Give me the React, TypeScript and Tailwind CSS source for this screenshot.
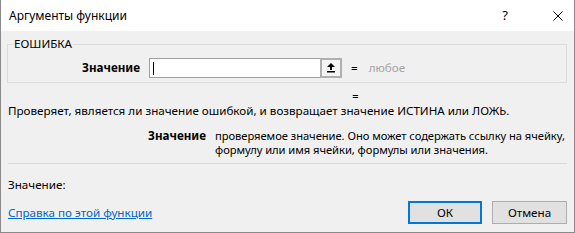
import React from "react";

const font = { fontFamily: '"Noto Sans", "Open Sans", sans-serif' };

function UpArrowIcon() {
  return (
    <svg width="8" height="10" viewBox="0 0 8 10" className="block">
      <path d="M4 0 L8 4 L5 4 L5 7 L3 7 L3 4 L0 4 Z" fill="#000" />
      <rect x="0" y="8" width="8" height="1.5" fill="#000" />
    </svg>
  );
}

function CloseIcon() {
  return (
    <svg width="10" height="10" viewBox="0 0 10 10" className="block">
      <path d="M0.5 0.5 L9.5 9.5 M9.5 0.5 L0.5 9.5" stroke="#000" strokeWidth="1" />
    </svg>
  );
}

export default function App() {
  return (
    <div
      className="w-[575px] h-[233px] bg-[#f0f0f0] border-l border-r border-b border-[#8a8a8a] flex flex-col text-[11.65px] text-black overflow-hidden"
      style={font}
    >
      {/* title bar */}
      <div className="h-[31px] bg-white flex items-center shrink-0">
        <span className="pl-[8px] text-[12px]">Аргументы функции</span>
        <span className="ml-auto mr-[45px] text-[13px] leading-none">?</span>
        <span className="mr-[11px]">
          <CloseIcon />
        </span>
      </div>

      <div className="pl-[6px] pr-[7px] flex flex-col">
        {/* group box */}
        <div className="relative mt-[13px] border border-[#dcdcdc] h-[39px] pt-[13px] flex items-start">
          <span className="absolute left-[5px] -top-[9px] px-[1px] bg-[#f0f0f0] leading-[16px]">
            ЕОШИБКА
          </span>
          <span className="w-[132px] text-right font-bold leading-[20px]">Значение</span>
          <div className="ml-[9px] flex">
            <div className="w-[171px] h-[20px] bg-white border border-[#a0a0a0] border-r-0 flex items-center pl-[3px]">
              <span className="w-px h-[13px] bg-black" />
            </div>
            <div className="w-[22px] h-[20px] border-2 border-[#b0b0b0] bg-[#f4f4f4] flex items-center justify-center">
              <UpArrowIcon />
            </div>
          </div>
          <span className="ml-[9px] leading-[20px]">=</span>
          <span className="ml-[11px] leading-[20px] text-[#a5a5a5]">любое</span>
        </div>

        <div className="pl-[345px] leading-[12px] mt-[7px]">=</div>

        <div className="pl-[1px] leading-[16px] mt-[1px] whitespace-nowrap">
          Проверяет, является ли значение ошибкой, и возвращает значение ИСТИНА или ЛОЖЬ.
        </div>

        <div className="flex mt-[10px] leading-[14px]">
          <span className="w-[199px] text-right font-bold shrink-0">Значение</span>
          <div className="ml-[9px] flex flex-col whitespace-nowrap text-[11.2px] tracking-[-0.05px]">
            <span>проверяемое значение. Оно может содержать ссылку на ячейку,</span>
            <span>формулу или имя ячейки, формулы или значения.</span>
          </div>
        </div>

        <div className="mt-[6px] ml-[1px] h-px bg-[#dadada]" />

        <div className="pl-[1px] mt-[13px] leading-[16px]">Значение:</div>

        <div className="flex items-center mt-[8px]">
          <a className="pl-[1px] text-[#0066cc] underline leading-[16px]" href="#">
            Справка по этой функции
          </a>
          <button className="ml-auto w-[74px] h-[23px] bg-[#e1e1e1] border-2 border-[#0078d7]">
            ОК
          </button>
          <button className="ml-[10px] w-[75px] h-[23px] bg-[#e1e1e1] border border-[#adadad]">
            Отмена
          </button>
        </div>
      </div>
    </div>
  );
}
